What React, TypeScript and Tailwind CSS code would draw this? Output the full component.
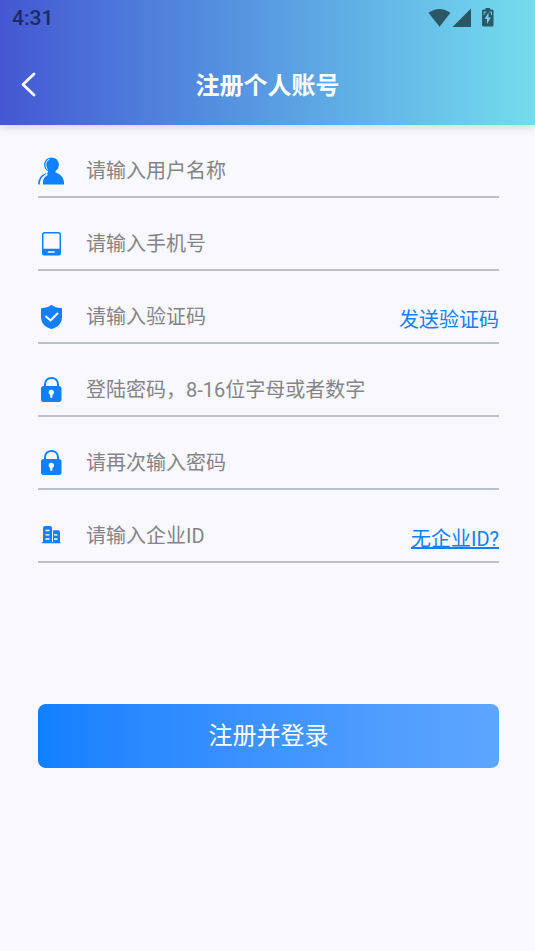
import type { ReactNode } from 'react'

const UserIcon = () => (
  <svg viewBox="0 0 26 28" className="h-7 w-[26px] shrink-0" aria-hidden="true">
    <circle cx="13.5" cy="7.8" r="7.4" fill="#1080ff" />
    <path
      d="M10 12H17.5V15.500C21.500 17 26 19.500 26 26V27.500H5V26C5 20 7.500 17 10 15.500Z"
      fill="#1080ff"
    />
    <path
      d="M7.800 17C3.500 18.500 .900 21.500 .900 27.500"
      fill="none"
      stroke="#1080ff"
      strokeWidth="1.600"
    />
    <path
      d="M11.500 2.200C7.200 4 7 9.500 9.600 12.600"
      fill="none"
      stroke="#f8f8fe"
      strokeWidth="1"
    />
    <path
      d="M9.500 17.200C5.500 19 3.600 21.500 3.300 27.500"
      fill="none"
      stroke="#f8f8fe"
      strokeWidth="1.500"
    />
  </svg>
)

const PhoneIcon = () => (
  <svg viewBox="0 0 26 28" className="h-7 w-[26px] shrink-0" aria-hidden="true">
    <path
      fillRule="evenodd"
      d="M6.500 2H20.500Q23 2 23 4.500V23Q23 25.500 20.500 25.500H6.500Q4 25.500 4 23V4.500Q4 2 6.500 2ZM6.600 3.500Q5.500 3.500 5.500 4.600V18.800H21.500V4.600Q21.500 3.500 20.400 3.500Z"
      fill="#1080ff"
    />
    <path d="M10.500 22H16" stroke="#fff" strokeWidth="1.700" strokeLinecap="round" />
  </svg>
)

const ShieldIcon = () => (
  <svg viewBox="0 0 26 28" className="h-7 w-[26px] shrink-0" aria-hidden="true">
    <path
      d="M13.500 1.800C16 4 19.500 5 23 5Q24 5 24 6V14C24 20 20 24.500 13.500 26C7 24.500 3 20 3 14V6Q3 5 4 5C7.500 5 11 4 13.500 1.800Z"
      fill="#1080ff"
    />
    <path
      d="M8 13.500L12.500 17.500L19.500 10.500"
      fill="none"
      stroke="#fff"
      strokeWidth="2"
      strokeLinecap="round"
    />
  </svg>
)

const LockIcon = () => (
  <svg viewBox="0 0 26 28" className="h-7 w-[26px] shrink-0" aria-hidden="true">
    <path
      d="M7 11V8.500C7 -.200 20 -.200 20 8.500V11"
      fill="none"
      stroke="#1080ff"
      strokeWidth="2"
    />
    <rect x="3" y="10" width="20.500" height="16" rx="2.800" fill="#1080ff" />
    <circle cx="13.300" cy="16.300" r="2.600" fill="#fff" />
    <path d="M13.300 17V21" stroke="#fff" strokeWidth="2.200" strokeLinecap="round" />
  </svg>
)

const CompanyIcon = () => (
  <svg viewBox="0 0 26 28" className="h-7 w-[26px] shrink-0" aria-hidden="true">
    <path
      d="M4 20H5V6Q5 4 7 4H12Q14 4 14 6V20H15V8.200H20Q22 8.200 22 10.200V20H22.500V21.200H4Z"
      fill="#1080ff"
    />
    <path
      d="M7.500 8.500H11.500M7.500 12.800H11.500M7.500 17H11.500M16 12.800H19.500M16 17H19.500"
      stroke="#fff"
      strokeWidth="1.300"
    />
  </svg>
)

interface FieldProps {
  id: string
  type?: string
  placeholder: string
  icon: ReactNode
  children?: ReactNode
}

const Field = ({ id, type = 'text', placeholder, icon, children }: FieldProps) => {
  return (
    <div className="flex h-[73px] items-center border-b-2 border-[#bebfcd] pt-5">
      <label htmlFor={id} aria-label={placeholder}>
        {icon}
      </label>
      <input
        id={id}
        type={type}
        placeholder={placeholder}
        className="ml-[22px] h-10 min-w-0 flex-1 bg-transparent text-xl text-gray-800 outline-none placeholder:text-[#848488]"
      />
      {children}
    </div>
  )
}

const StatusBar = () => (
  <div className="flex h-9 items-center justify-between pr-10 pl-3">
    <span className="pt-0.5 text-[21px] font-medium text-[#1c2b63]">4:31</span>
    <svg viewBox="0 0 67 20" className="h-5 w-[67px] fill-[#2b5766]" aria-hidden="true">
      <path d="M.500 4.800Q11.500-3 22.500 4.800L11.500 18.800Z" />
      <path d="M43 .500V19H24.500Z" />
      <path
        fillRule="evenodd"
        d="M57.500 0H62V1.500H64Q65.500 1.500 65.500 3V17Q65.500 18.500 64 18.500H55.500Q54 18.500 54 17V3Q54 1.500 55.500 1.500H57.500ZM60.500 4.500L56.500 11H59V16L63 9.500H60.500Z"
      />
      <path d="M56 7V4H58.500M61.500 4H63.500V7" fill="none" stroke="#70cbe4" />
    </svg>
  </div>
)

const App = () => {
  return (
    <div className="min-h-screen bg-[#f8f8fe] font-[Roboto,'Noto_Sans_CJK_SC',sans-serif]">
      <header className="h-[125px] bg-linear-to-r from-[#4557d2] to-[#74dcec] shadow-[0_1px_10px_rgba(0,0,0,0.18)]">
        <StatusBar />
        <div className="grid grid-cols-[56px_1fr_56px] items-center pt-6">
          <button type="button" aria-label="返回" className="flex h-12 items-center pl-5">
            <svg viewBox="0 0 16 26" className="h-[26px] w-4" aria-hidden="true">
              <path
                d="M14 3L3 13.500L14 24"
                fill="none"
                stroke="#fff"
                strokeWidth="2.800"
                strokeLinecap="round"
                strokeLinejoin="round"
              />
            </svg>
          </button>
          <h1 className="pt-1 text-center text-2xl font-bold text-white">注册个人账号</h1>
        </div>
      </header>
      <form className="pr-9 pl-[38px]" onSubmit={(e) => e.preventDefault()}>
        <Field id="username" placeholder="请输入用户名称" icon={<UserIcon />} />
        <Field id="phone" type="tel" placeholder="请输入手机号" icon={<PhoneIcon />} />
        <Field id="code" placeholder="请输入验证码" icon={<ShieldIcon />}>
          <button type="button" className="mt-1.5 text-xl text-[#1080ff]">
            发送验证码
          </button>
        </Field>
        <Field
          id="password"
          type="password"
          placeholder="登陆密码，8-16位字母或者数字"
          icon={<LockIcon />}
        />
        <Field
          id="confirm"
          type="password"
          placeholder="请再次输入密码"
          icon={<LockIcon />}
        />
        <Field id="company" placeholder="请输入企业ID" icon={<CompanyIcon />}>
          <a href="#company" className="mt-1.5 text-xl text-[#1080ff] underline">
            无企业ID?
          </a>
        </Field>
        <button
          type="submit"
          className="mt-[141px] h-16 w-full rounded-lg bg-linear-to-r from-[#1080ff] to-[#5ea6ff] text-2xl text-white"
        >
          注册并登录
        </button>
      </form>
    </div>
  )
}

export default App
